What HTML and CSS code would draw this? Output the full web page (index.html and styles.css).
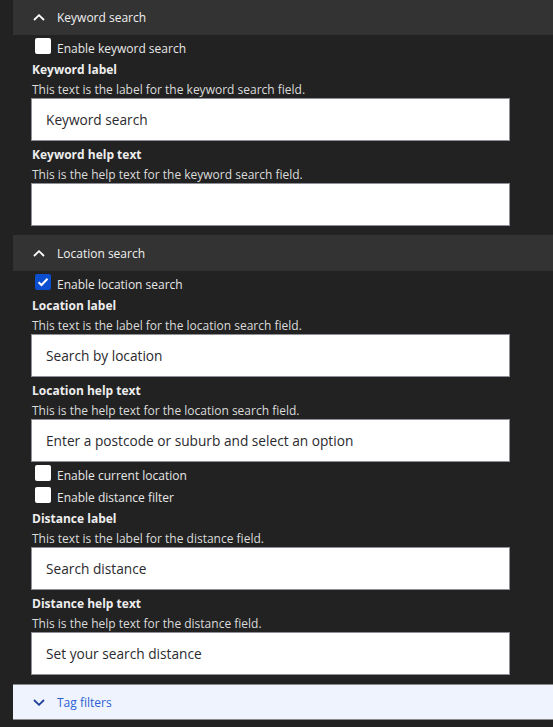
FILE: index.html
```html
<!DOCTYPE html>
<html>
<head>
<meta charset="utf-8">
<link rel="stylesheet" href="styles.css">
</head>
<body>
<div class="panel">
  <section class="group">
    <div class="group-head">
      <svg class="chev" width="12" height="7" viewBox="0 0 12 7"><path d="M1 6 L6 1.2 L11 6" fill="none" stroke="#fff" stroke-width="1.8"/></svg>
      <span>Keyword search</span>
    </div>
    <div class="group-body">
      <label class="check first"><span class="box"></span><span>Enable keyword search</span></label>
      <div class="field">
        <div class="f-label">Keyword label</div>
        <div class="f-help">This text is the label for the keyword search field.</div>
        <div class="input">Keyword search</div>
      </div>
      <div class="field">
        <div class="f-label">Keyword help text</div>
        <div class="f-help">This is the help text for the keyword search field.</div>
        <div class="input"></div>
      </div>
    </div>
  </section>
  <section class="group">
    <div class="group-head">
      <svg class="chev" width="12" height="7" viewBox="0 0 12 7"><path d="M1 6 L6 1.2 L11 6" fill="none" stroke="#fff" stroke-width="1.8"/></svg>
      <span>Location search</span>
    </div>
    <div class="group-body">
      <label class="check first"><span class="box on"><svg width="12" height="10" viewBox="0 0 12 10"><path d="M1.5 5.2 L4.5 8 L10.5 1.8" fill="none" stroke="#fff" stroke-width="2"/></svg></span><span>Enable location search</span></label>
      <div class="field">
        <div class="f-label">Location label</div>
        <div class="f-help">This text is the label for the location search field.</div>
        <div class="input">Search by location</div>
      </div>
      <div class="field">
        <div class="f-label">Location help text</div>
        <div class="f-help">This is the help text for the location search field.</div>
        <div class="input">Enter a postcode or suburb and select an option</div>
      </div>
      <label class="check after-input"><span class="box"></span><span>Enable current location</span></label>
      <label class="check"><span class="box"></span><span>Enable distance filter</span></label>
      <div class="field">
        <div class="f-label">Distance label</div>
        <div class="f-help">This text is the label for the distance field.</div>
        <div class="input">Search distance</div>
      </div>
      <div class="field">
        <div class="f-label">Distance help text</div>
        <div class="f-help">This is the help text for the distance field.</div>
        <div class="input">Set your search distance</div>
      </div>
    </div>
  </section>
  <section class="group closed">
    <div class="group-head">
      <svg class="chev" width="12" height="7" viewBox="0 0 12 7"><path d="M1 1 L6 5.8 L11 1" fill="none" stroke="#1f3f9a" stroke-width="1.8"/></svg>
      <span>Tag filters</span>
    </div>
  </section>
</div>
</body>
</html>
```
FILE: styles.css
```css
html, body {
  margin: 0;
  padding: 0;
  background: #222222;
}
body {
  font-family: "Open Sans", "Noto Sans", sans-serif;
  font-size: 12px;
  color: #e6e6e6;
  overflow: hidden;
}
.panel {
  margin-left: 13px;
  margin-top: -1px;
}
.group {
  margin-bottom: 9px;
}
.group-head {
  height: 36px;
  background: #333333;
  display: flex;
  align-items: center;
  gap: 12px;
  padding-left: 20px;
  color: #f0f0f0;
  font-size: 12px;
}
.chev {
  display: block;
}
.group-body {
  padding-left: 18px;
  width: 479px;
}
.check {
  display: flex;
  align-items: flex-start;
  height: 22px;
  gap: 6px;
  padding-left: 4px;
  color: #e8e8e8;
}
.check.first {
  margin-top: 1px;
}
.check.after-input {
  margin-top: 1px;
}
.box {
  width: 16px;
  height: 16px;
  margin-top: 2px;
  background: #fff;
  border-radius: 2px;
  display: flex;
  align-items: center;
  justify-content: center;
  flex: none;
}
.box.on {
  background: #0b4fd0;
}
.check span:last-child {
  line-height: 20px;
  margin-top: 3px;
}
.field + .field {
  margin-top: 2px;
}
.f-label {
  font-weight: 700;
  line-height: 22px;
  padding-top: 1px;
  padding-left: 1px;
  color: #eeeeee;
}
.f-help {
  line-height: 17px;
  padding-left: 1px;
  color: #dcdcdc;
}
.input {
  box-sizing: border-box;
  height: 43px;
  background: #fff;
  border: 1px solid #8f8f97;
  padding-left: 14px;
  display: flex;
  align-items: center;
  font-size: 13.7px;
  color: #2a2a2e;
}
.group.closed .group-head {
  background: #eef3fd;
  border-top: 1px solid #8a8a8a;
  border-bottom: 1px solid #8a8a8a;
  height: 34px;
  color: #2c5fd4;
}
```
